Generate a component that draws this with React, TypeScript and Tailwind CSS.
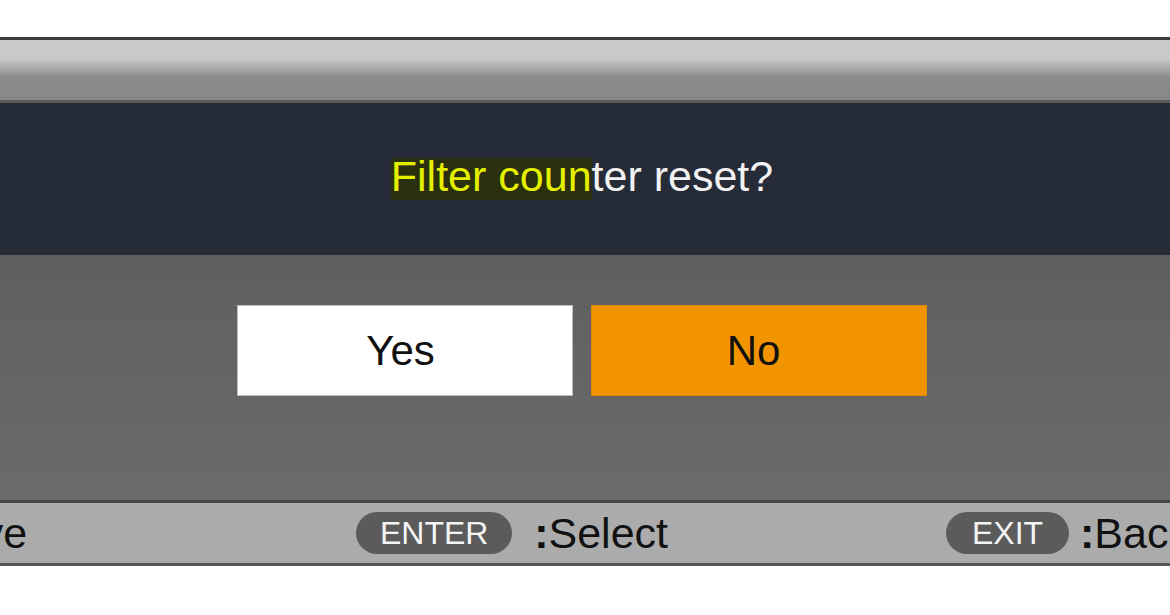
import React from 'react'

export default function App() {
  return (
    <div className="w-[1170px] h-[615px] overflow-hidden bg-white pt-[37px] font-['Liberation_Sans',Arial,sans-serif]">
      {/* Title bar */}
      <div className="h-[66px] border-t-[3px] border-b-[3px] border-t-[#3c3c3c] border-b-[#5a5a5a] bg-[linear-gradient(to_bottom,#c9cac9_0%,#c8c9c8_31%,#8b8b8b_62%,#878787_100%)]" />

      {/* Message */}
      <div className="h-[152px] bg-[#252b37] flex items-center justify-center pb-[4px] pr-[6px]">
        <p className="text-[43px] leading-[43px] text-[#f2f2f2] whitespace-nowrap">
          <span className="inline-block leading-[36px] pb-[6px] bg-[#2a2f0d] text-[#e4ef00]">Filter coun</span>
          ter reset?
        </p>
      </div>

      {/* Choices */}
      <div className="h-[245px] pt-[50px] flex justify-center gap-[18px] pr-[6px] bg-[linear-gradient(to_bottom,#5f5f5f,#6b6b6b)]">
        <button className="w-[336px] h-[91px] pr-[9px] bg-white border border-[#bdbdbd] text-[42px] text-[#111]">
          Yes
        </button>
        <button className="w-[336px] h-[91px] pr-[11px] bg-[#f29400] border border-[#e08800] text-[42px] text-[#111]">
          No
        </button>
      </div>

      {/* Key guide */}
      <div className="h-[66px] border-t-[3px] border-b-[3px] border-t-[#474747] border-b-[#555555] bg-[#ababab] flex items-center text-[43px] text-[#111] whitespace-nowrap">
        <span className="ml-[-78px] shrink-0">Move</span>
        <span className="ml-[329px] shrink-0 w-[156px] h-[42px] rounded-full bg-[#5b5b5b] flex items-center justify-center text-[32px] text-[#f4f4f4]">
          ENTER
        </span>
        <span className="ml-[22px] shrink-0">
          <span className="font-bold">:</span>Select
        </span>
        <span className="ml-[278px] shrink-0 w-[123px] h-[42px] rounded-full bg-[#5b5b5b] flex items-center justify-center text-[32px] text-[#f4f4f4]">
          EXIT
        </span>
        <span className="ml-[11px] shrink-0">
          <span className="font-bold">:</span>Back
        </span>
      </div>
    </div>
  )
}
